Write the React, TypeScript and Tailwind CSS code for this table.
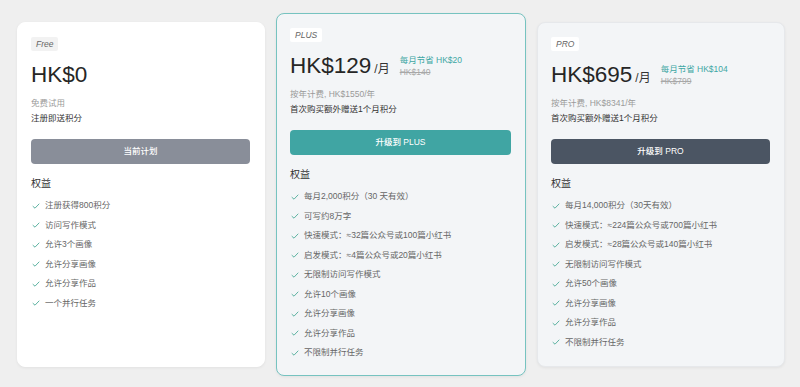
import React from 'react';

type Plan = {
  badge: string;
  price: string;
  perMonth?: boolean;
  save?: string;
  original?: string;
  note: string;
  extra: string;
  button: string;
  buttonClass: string;
  cardClass: string;
  badgeClass: string;
  features: string[];
};

const plans: Plan[] = [
  {
    badge: 'Free',
    price: 'HK$0',
    note: '免费试用',
    extra: '注册即送积分',
    button: '当前计划',
    buttonClass: 'bg-[#898e99]',
    cardClass: 'w-[248px] h-[345px] bg-white border-white',
    badgeClass: 'bg-[#f2f2f2]',
    features: ['注册获得800积分', '访问写作模式', '允许3个画像', '允许分享画像', '允许分享作品', '一个并行任务'],
  },
  {
    badge: 'PLUS',
    price: 'HK$129',
    perMonth: true,
    save: '每月节省 HK$20',
    original: 'HK$140',
    note: '按年计费, HK$1550/年',
    extra: '首次购买额外赠送1个月积分',
    button: '升级到 PLUS',
    buttonClass: 'bg-[#40a5a3]',
    cardClass: 'w-[250px] h-[363px] bg-[#f3f5f7] border-[#76c3c0]',
    badgeClass: 'bg-white',
    features: [
      '每月2,000积分（30 天有效）',
      '可写约8万字',
      '快速模式：≈32篇公众号或100篇小红书',
      '启发模式：≈4篇公众号或20篇小红书',
      '无限制访问写作模式',
      '允许10个画像',
      '允许分享画像',
      '允许分享作品',
      '不限制并行任务',
    ],
  },
  {
    badge: 'PRO',
    price: 'HK$695',
    perMonth: true,
    save: '每月节省 HK$104',
    original: 'HK$799',
    note: '按年计费, HK$8341/年',
    extra: '首次购买额外赠送1个月积分',
    button: '升级到 PRO',
    buttonClass: 'bg-[#4b5563]',
    cardClass: 'w-[248px] h-[345px] bg-[#f3f5f7] border-[#e6e8eb]',
    badgeClass: 'bg-white',
    features: [
      '每月14,000积分（30天有效）',
      '快速模式：≈224篇公众号或700篇小红书',
      '启发模式：≈28篇公众号或140篇小红书',
      '无限制访问写作模式',
      '允许50个画像',
      '允许分享画像',
      '允许分享作品',
      '不限制并行任务',
    ],
  },
];

const Check = () => (
  <svg width="8" height="8" viewBox="0 0 8 8" className="shrink-0">
    <path d="M1 4.4 L3 6.2 L7 2" fill="none" stroke="#5fb3a2" strokeWidth="1" strokeLinecap="round" strokeLinejoin="round" />
  </svg>
);

const PlanCard: React.FC<{ plan: Plan }> = ({ plan }) => (
  <div className={`shrink-0 rounded-[8px] border shadow-[0_1px_3px_rgba(0,0,0,0.06)] px-[13px] pt-[14px] flex flex-col ${plan.cardClass}`}>
    {/* Badge */}
    <div className="flex">
      <span className={`px-[5px] h-[14px] leading-[14px] text-[8.5px] italic text-[#666] rounded-[2px] ${plan.badgeClass}`}>
        {plan.badge}
      </span>
    </div>

    {/* Price */}
    <div className="mt-[12px] flex items-center h-[24px]">
      <div className="flex items-baseline">
        <span className="text-[22.5px] leading-[24px] text-[#262626]">{plan.price}</span>
        {plan.perMonth && <span className="ml-[3px] text-[12px] text-[#333]">/月</span>}
      </div>
      {plan.save && (
        <div className="ml-[10px] flex flex-col text-[8.5px] leading-[12px]">
          <span className="text-[#3fa7a4]">{plan.save}</span>
          <span className="text-[#a8a8a8] line-through">{plan.original}</span>
        </div>
      )}
    </div>

    <div className="mt-[9px] text-[8.5px] leading-[15px] text-[#9a9a9a]">{plan.note}</div>
    <div className="text-[8.5px] leading-[15px] text-[#333]">{plan.extra}</div>

    <button className={`mt-[13px] mr-[1px] h-[25px] rounded-[4px] text-white text-[8.5px] font-medium ${plan.buttonClass}`}>
      {plan.button}
    </button>

    <div className="mt-[13px] text-[10px] leading-[14px] text-[#333]">权益</div>

    <ul className="mt-[5px] flex flex-col">
      {plan.features.map((f) => (
        <li key={f} className="h-[19.5px] flex items-center gap-[5px] pl-[1px] text-[8.5px] text-[#666]">
          <Check />
          <span>{f}</span>
        </li>
      ))}
    </ul>
  </div>
);

export default function App() {
  return (
    <div
      className="w-[800px] h-[387px] bg-[#efefef] flex items-center pl-[17px] pt-[2px] gap-[11px]"
      style={{ fontFamily: '"Liberation Sans", "Noto Sans CJK SC", sans-serif' }}
    >
      {plans.map((p) => (
        <PlanCard key={p.badge} plan={p} />
      ))}
    </div>
  );
}
